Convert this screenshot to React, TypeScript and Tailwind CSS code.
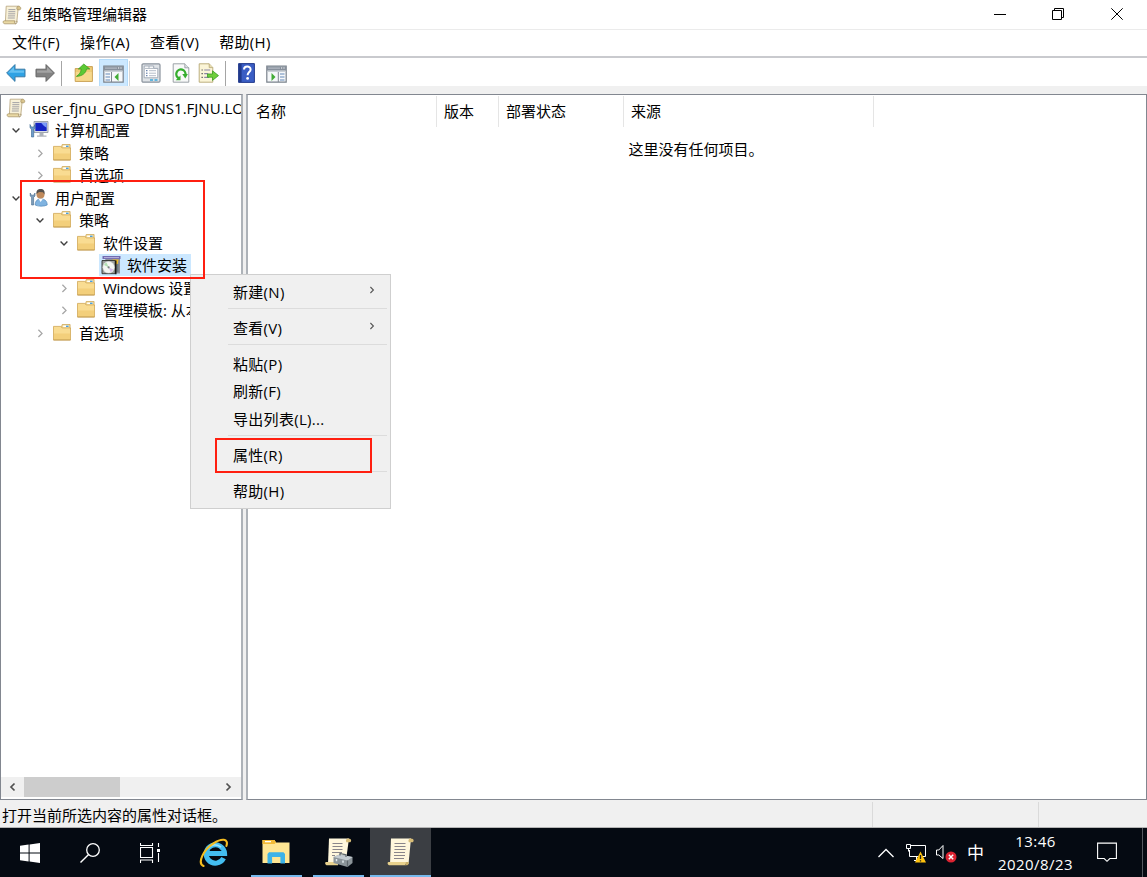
import React from 'react';

type IconProps = { className?: string };

const ScrollIcon = ({ className = 'w-5 h-5' }: IconProps) => (
  <svg viewBox="0 0 20 20" className={`shrink-0 ${className}`}>
    <path d="M4.2 1.2h12.2L14.8 17H3.4z" fill="#f8f1d8" stroke="#b5a27a" strokeWidth=".8" />
    <path d="M15.4 4.8c-1-.8-.8-3.6 1-3.6 3 0 2.8 3.6 1.2 3.6z" fill="#d9c48c" stroke="#a08c5e" strokeWidth=".7" />
    <path d="M2.2 15.8h10.6c-.8 1.2-.2 3 1 3H2.8c-2 0-2.2-3-.6-3z" fill="#ead9a4" stroke="#a08c5e" strokeWidth=".7" />
    <path d="M13.6 18.8c1.4 0 1.6-2 1.2-3" fill="none" stroke="#a08c5e" strokeWidth=".8" />
    <path d="M6.4 4.6h7M6.3 6.7h7M6.2 8.8h7M6 10.9h7M5.8 13h7" stroke="#9a9aa0" strokeWidth=".9" />
  </svg>
);

const FolderIcon = () => (
  <svg viewBox="0 0 20 20" className="w-5 h-5">
    <path d="M8 5.5l1.2-4h7.9V6H8z" fill="#f3dc9c" stroke="#caa04e" strokeWidth=".7" />
    <path d="M10.2 2.6h5.6v1.6h-5.6z" fill="#fff" />
    <path d="M13 2.6h2.6v1.4H13z" fill="#4ba0dd" />
    <path d="M.5 3.4h7.3l1.3 1.5h8.4v12H.5z" fill="#f9dc92" stroke="#d0a755" strokeWidth=".8" />
    <path d="M1 10.5h16v6H1z" fill="#f3cf7b" />
    <path d="M.5 17h17" stroke="#b98f43" strokeWidth=".8" />
  </svg>
);

const ComputerIcon = () => (
  <svg viewBox="0 0 20 20" className="w-5 h-5">
    <path d="M5 1.5h14v11H5z" fill="#d9dde2" stroke="#8d949e" strokeWidth=".8" />
    <path d="M6.3 2.8h11.4v8.2H6.3z" fill="#1423c4" />
    <path d="M12 2.8h5.7v5L15 6z" fill="#7a9af8" />
    <path d="M10.5 12.8h4v2.6h3v1.4H8v-1.4h2.5z" fill="#aeb3ba" />
    <path d="M1 4.5v3.3l1.5 1.4V17h2.2V9.2L6 7.8V4.5L4.8 7H2.3z" fill="#6f9dca" stroke="#386490" strokeWidth=".6" />
  </svg>
);

const UserIcon = () => (
  <svg viewBox="0 0 20 20" className="w-5 h-5">
    <path d="M6.2 17c0-4 2-6 5.6-6 4 0 6.4 2 6.4 6-3 1.6-9 1.6-12 0z" fill="#7fb3e0" stroke="#5086b8" strokeWidth=".7" />
    <path d="M9.8 11l1.8 3 2.2-3z" fill="#fff" />
    <circle cx="11.5" cy="6.5" r="4" fill="#c08a5c" />
    <path d="M7.5 6C7 2.2 9.3 1 11.6 1c3 0 4.7 2 3.8 5.4L14 4.2 10 4z" fill="#54504d" />
    <path d="M1.2 5v3l1.4 1.4V17h2V9.4L6 8V5L4.7 7.2H2.4z" fill="#7f9fbd" stroke="#426788" strokeWidth=".6" />
  </svg>
);

const SoftwareIcon = () => (
  <svg viewBox="0 0 20 20" className="w-5 h-5">
    <path d="M1.5 1h18v3h-18z" fill="#736cb0" />
    <path d="M3 2.6h15" stroke="#cbc7ea" strokeWidth=".8" />
    <path d="M4 4h15v14.5h-6z" fill="#8f919b" />
    <path d="M11.5 4.5h6L16.5 10l-3.5-1z" fill="#f0bd2a" />
    <path d="M15.5 9h2v8h-2z" fill="#6c7a80" />
    <path d="M1 5.5h13.2v13.2H1z" fill="#9da09e" stroke="#30322f" strokeWidth=".9" />
    <circle cx="7.6" cy="12.3" r="5.8" fill="#f4f6f3" stroke="#d9dcdc" strokeWidth=".5" />
    <path d="M7.6 12.3L3 10a5 5 0 0 1 2.5-2.6z" fill="#b2dfb4" />
    <path d="M7.6 12.3l4.6 2.3a5 5 0 0 1-2.5 2.6z" fill="#d5bce6" />
    <circle cx="7.6" cy="12.3" r="1.1" fill="#7a8580" />
    <path d="M14.8 5.5v13.8" stroke="#151515" strokeWidth="1.4" />
  </svg>
);

const BackIcon = () => (
  <svg viewBox="0 0 20 20" className="w-5 h-5">
    <path d="M.6 10L9 1.6v4.6h10v7.6H9v4.6z" fill="#2fa2e4" stroke="#3a7ba6" strokeWidth="1" strokeLinejoin="round" />
    <path d="M2.2 9.8L8 4v3.4h10v2.4z" fill="#66c1f1" />
  </svg>
);

const ForwardIcon = () => (
  <svg viewBox="0 0 20 20" className="w-5 h-5">
    <path d="M19.4 10L11 1.6v4.6H1v7.6h10v4.6z" fill="#828282" stroke="#666" strokeWidth="1" strokeLinejoin="round" />
    <path d="M17.8 9.8L12 4v3.4H2v2.4z" fill="#a3a3a3" />
  </svg>
);

const UpFolderIcon = () => (
  <svg viewBox="0 0 20 20" className="w-5 h-5">
    <path d="M1.2 5.6h8l1.4-2h7.8v14.8H1.2z" fill="#efcc76" stroke="#c49a4c" strokeWidth=".9" />
    <path d="M1.8 9h16v8.8h-16z" fill="#f6d88c" />
    <path d="M2.4 13.4c3-2 4.6-4.2 4.8-7.4H4.4L9.8 1l6 5h-3.3c-.6 4-4 7.2-10.1 7.4z" fill="#5cc934" stroke="#349a1e" strokeWidth=".7" />
  </svg>
);

const PaneIcon = ({ flip = false }: { flip?: boolean }) => (
  <svg viewBox="0 0 21 20" className="w-[21px] h-5">
    <path d="M.8 2.2h19.4v16H.8z" fill="#f6f8fa" stroke="#7a828c" strokeWidth="1.2" />
    <path d="M1 2.4h19v4.2H1z" fill="#87909c" />
    <path d="M2 4.1h12" stroke="#c5cbd2" strokeWidth=".9" />
    <path d="M15 4h1.2M17.4 4h1.2" stroke="#fff" strokeWidth="1.2" />
    <path d="M1 7.4h19" stroke="#c5cbd2" strokeWidth="1" />
    {flip ? (
      <>
        <path d="M12.3 8v10" stroke="#808791" strokeWidth="1" />
        <path d="M5.5 9L9.5 13l-4 4z" fill="#42ac35" />
        <path d="M14 10h4.5M14 13h4.5M14 16h4.5" stroke="#6387b8" strokeWidth="1.2" />
      </>
    ) : (
      <>
        <path d="M8.5 8v10" stroke="#808791" strokeWidth="1" />
        <path d="M15.5 9l-4 4 4 4z" fill="#42ac35" />
        <path d="M2.5 10H7M2.5 13H7M2.5 16H7" stroke="#6387b8" strokeWidth="1.2" />
      </>
    )}
  </svg>
);

const PropertiesIcon = () => (
  <svg viewBox="0 0 20 20" className="w-5 h-5">
    <rect x="1" y=".8" width="18" height="18.4" rx="1.2" fill="#dfe3e7" stroke="#8b939d" strokeWidth="1.2" />
    <path d="M3.2 3h9.5v2.4h4.1v9.4H3.2z" fill="#fff" stroke="#9aa4b1" strokeWidth=".9" />
    <path d="M8 3v2.4M12.7 5.4H4" stroke="#9aa4b1" strokeWidth=".8" />
    <path d="M5 7.7h1.5M5 10.2h1.5M5 12.7h1.5" stroke="#4c6b9c" strokeWidth="1" />
    <path d="M8 7.7h7M8 10.2h7M8 12.7h7" stroke="#b4bdc9" strokeWidth="1" />
    <path d="M9 17h3M13.5 17h3" stroke="#38a7dc" strokeWidth="1.5" />
  </svg>
);

const RefreshIcon = () => (
  <svg viewBox="0 0 20 20" className="w-5 h-5">
    <path d="M2.2.8h11.6l4 4v14.4H2.2z" fill="#f8f9f9" stroke="#92989e" strokeWidth=".9" />
    <path d="M13.8.8v4h4" fill="#dde0e2" stroke="#92989e" strokeWidth=".8" />
    <path d="M7.8 15.2A4.6 4.6 0 1 1 14.4 12" fill="none" stroke="#35ae2e" strokeWidth="2.3" />
    <path d="M11.3 11h5.6l-2.6 4.4z" fill="#35ae2e" />
    <path d="M9.5 12.4v4.8H4.7z" fill="#35ae2e" />
  </svg>
);

const ExportIcon = () => (
  <svg viewBox="0 0 21 20" className="w-[21px] h-5">
    <path d="M1.2.8h10l3.6 3.8v14.6H1.2z" fill="#fbf5d8" stroke="#b6a773" strokeWidth=".9" />
    <path d="M11.2.8v3.8h3.6" fill="#e7dcb2" stroke="#b6a773" strokeWidth=".8" />
    <path d="M3.5 7h1.3M3.5 10.7h1.3M3.5 14.4h1.3" stroke="#555" strokeWidth="1.2" />
    <path d="M6.2 7h6M6.2 10.7h4M6.2 14.4h5" stroke="#8a86a5" strokeWidth="1.2" />
    <path d="M9.5 11h5V7.8l6 4.8-6 4.8v-3.2h-5z" fill="#6fce3c" stroke="#3b9d24" strokeWidth=".8" />
  </svg>
);

const HelpIcon = () => (
  <svg viewBox="0 0 17 20" className="w-[17px] h-5">
    <path d="M.6.6h15.8v18.8H.6z" fill="#3a5dc4" stroke="#223a8c" strokeWidth="1" />
    <path d="M1 1h2.6v18H1z" fill="#20398c" />
    <path d="M6 6.6c0-4 6.6-4 6.6-.2 0 2.6-3 2.8-3 5.8" fill="none" stroke="#fff" strokeWidth="2" />
    <circle cx="9.6" cy="15.4" r="1.4" fill="#fff" />
  </svg>
);

const Chevron = ({ open = false }: { open?: boolean }) => (
  <svg viewBox="0 0 10 10" className="w-2.5 h-2.5">
    {open ? (
      <path d="M1.6 3.6L5 7l3.4-3.4" fill="none" stroke="#404040" strokeWidth="1.4" />
    ) : (
      <path d="M3.4 1.8L7 5.4 3.4 9" fill="none" stroke="#a6a6a6" strokeWidth="1.3" />
    )}
  </svg>
);

interface TreeNode {
  label: string;
  level: number;
  icon: React.ReactNode;
  open?: boolean;
  leaf?: boolean;
  selected?: boolean;
}

const tree: TreeNode[] = [
  { label: '计算机配置', level: 0, icon: <ComputerIcon />, open: true },
  { label: '策略', level: 1, icon: <FolderIcon /> },
  { label: '首选项', level: 1, icon: <FolderIcon /> },
  { label: '用户配置', level: 0, icon: <UserIcon />, open: true },
  { label: '策略', level: 1, icon: <FolderIcon />, open: true },
  { label: '软件设置', level: 2, icon: <FolderIcon />, open: true },
  { label: '软件安装', level: 3, icon: <SoftwareIcon />, leaf: true, selected: true },
  { label: 'Windows 设置', level: 2, icon: <FolderIcon /> },
  { label: '管理模板: 从本', level: 2, icon: <FolderIcon /> },
  { label: '首选项', level: 1, icon: <FolderIcon /> },
];

const indent = ['pl-[5px]', 'pl-[29px]', 'pl-[53px]', 'pl-[77px]'];

const TreeRow = ({ node }: { node: TreeNode }) => (
  <div className={`flex h-[22.5px] items-center ${indent[node.level]}`}>
    <div className="w-5 shrink-0 pl-1">{!node.leaf && <Chevron open={node.open} />}</div>
    <div className={`flex h-[22px] shrink-0 items-center ${node.selected ? 'bg-[#cce8ff] pr-1' : ''}`}>
      <div className="ml-[3px] w-[26px] shrink-0">
        <div className="-ml-px">{node.icon}</div>
      </div>
      <span className={`-ml-px whitespace-nowrap leading-5 ${node.label.startsWith('W') ? 'tracking-[-.3px]' : ''}`}>
        {node.label}
      </span>
    </div>
  </div>
);

const MenuItem = ({ label, sub = false }: { label: string; sub?: boolean }) => (
  <div className="flex h-[27.5px] items-center justify-between pl-[42px] pr-[14px]">
    <span>{label}</span>
    {sub && (
      <svg viewBox="0 0 8 8" className="mb-[3px] w-2 h-2">
        <path d="M2.4 1L5.4 4l-3 3" fill="none" stroke="#555" strokeWidth="1.1" />
      </svg>
    )}
  </div>
);

const MenuSeparator = () => (
  <div className="h-[8.6px] pt-[2.5px] pl-[37px] pr-[3px]">
    <div className="h-px bg-[#dcdcdc]" />
  </div>
);

const ContextMenu = () => (
  <div className="absolute left-[190px] top-[274px] h-[235px] w-[201px] border border-[#cfcfcf] bg-[#f0f0f0] pt-[2.8px] tracking-[.3px]">
    <MenuItem label="新建(N)" sub />
    <MenuSeparator />
    <MenuItem label="查看(V)" sub />
    <MenuSeparator />
    <MenuItem label="粘贴(P)" />
    <MenuItem label="刷新(F)" />
    <MenuItem label="导出列表(L)..." />
    <MenuSeparator />
    <MenuItem label="属性(R)" />
    <MenuSeparator />
    <MenuItem label="帮助(H)" />
  </div>
);

const TitleBar = () => (
  <div className="flex h-[30px] items-center border-b border-[#ebebeb] pl-[2px]">
    <ScrollIcon />
    <span className="ml-[5px] flex-1 pb-px text-[15px]">组策略管理编辑器</span>
    <svg viewBox="0 0 12 12" className="mr-[46px] w-3 h-3">
      <path d="M0 5.5h12" stroke="#000" />
    </svg>
    <svg viewBox="0 0 12 12" className="mr-[47px] mb-[2px] w-3 h-3">
      <path d="M.5 2.5h9v9h-9zM2.5 2V.5h9v9H10" fill="none" stroke="#000" />
    </svg>
    <svg viewBox="0 0 12 12" className="mr-6 mb-[2px] w-3 h-3">
      <path d="M.3.3l11.4 11.4M11.7.3L.3 11.7" stroke="#000" />
    </svg>
  </div>
);

const Divider = () => <div className="h-[25px] w-px bg-[#a5a5a5]" />;

const Toolbar = () => (
  <div className="flex h-7 items-center pl-[6px] pt-[2px]">
    <BackIcon />
    <div className="ml-[9px]"><ForwardIcon /></div>
    <div className="ml-[6px] mr-[12px]"><Divider /></div>
    <UpFolderIcon />
    <div className="ml-[5px] flex h-[28px] w-[29px] items-center justify-center border border-[#b5dcfa] bg-[#cce8ff] pt-0.5">
      <PaneIcon />
    </div>
    <div className="mr-[11px] ml-px"><div className="h-[25px] w-px bg-[#d5d5d5]" /></div>
    <PropertiesIcon />
    <div className="ml-[10px]"><RefreshIcon /></div>
    <div className="ml-[7px]"><ExportIcon /></div>
    <div className="mr-[12px] ml-[6px]"><Divider /></div>
    <HelpIcon />
    <div className="ml-[11px] pt-0.5"><PaneIcon flip /></div>
  </div>
);

const Taskbar = () => (
  <div className="flex h-[49px] items-center bg-[#050a12] text-white">
    <div className="flex w-[60px] justify-center">
      <svg viewBox="0 0 20 20" className="w-5 h-5">
        <path d="M0 2.8l8.6-1.2v7.9H0zM9.6 1.4L20 0v9.5H9.6zM0 10.5h8.6v7.9L0 17.2zM9.6 10.5H20V20L9.6 18.6z" fill="#fff" />
      </svg>
    </div>
    <div className="flex w-[60px] justify-center">
      <svg viewBox="0 0 20 20" className="w-5 h-5">
        <circle cx="13" cy="7" r="6.3" fill="none" stroke="#fff" strokeWidth="1.3" />
        <path d="M8.6 11.4L.5 19.5" stroke="#fff" strokeWidth="1.4" />
      </svg>
    </div>
    <div className="flex w-[60px] justify-center">
      <svg viewBox="0 0 20 20" className="w-5 h-5">
        <path d="M.5 4.5h12v10H.5zM.5 0v2.5h12V0M.5 20v-3h12v3M18.5 0v4M18.5 10v9" fill="none" stroke="#fff" strokeWidth="1.1" />
        <path d="M17 6h3v3h-3z" fill="#fff" />
      </svg>
    </div>
    <div className="flex w-[71px] justify-center pr-[3px]">
      <svg viewBox="0 0 30 30" className="w-[30px] h-[30px]">
        <path d="M24.6 20.2A9.2 9.2 0 1 1 25.6 15.6H9" fill="none" stroke="#43bdf0" strokeWidth="5" />
        <path d="M9 10.2C11.6 6.5 18 5.4 22 9.2" fill="none" stroke="#9ae2fb" strokeWidth="1.6" />
        <path d="M4.5 28C-2 25 4.5 11.5 14.5 5.3 22.5.2 30 .2 27.4 8" fill="none" stroke="#f5bd20" strokeWidth="2.1" strokeLinecap="round" />
      </svg>
    </div>
    <div className="flex h-full w-[51px] items-center justify-center border-b-2 border-[#76b9ed]">
      <svg viewBox="0 0 28 26" className="mr-[2px] w-7 h-[26px]">
        <path d="M.5 1h12l1.5 2.5h13.5V24H.5z" fill="#ffe693" />
        <path d="M.5 1h12l1.5 2.5L12.5 5H.5z" fill="#f3bb37" />
        <path d="M3 2h6v1.3H3z" fill="#fff" />
        <path d="M5.5 24.5V15l1.5-1.7h14.5L23 15v9.5h-4.6V18h-8.3v6.5z" fill="#3db3e8" />
      </svg>
    </div>
    <div className="ml-[11px] flex h-full w-[51px] items-center justify-center border-b-2 border-[#76b9ed]">
      <svg viewBox="0 0 30 30" className="w-[30px] h-[30px]">
        <path d="M5 1.5h20L21.5 27H4z" fill="#fff7dc" />
        <path d="M22.5 5.3c-1-1-.7-3.8 1.7-3.8 4 0 3.4 3.8 1.3 3.8z" fill="#d8bd77" />
        <path d="M2 25h12v3.3H3.3C.8 28.3.7 25 2 25z" fill="#e8d18d" />
        <path d="M8.5 6.5h10M8.5 9.5h10M8.5 12.5h10M8 15.5h10M8 18.5h3" stroke="#89858a" strokeWidth="1" />
        <path d="M9.5 20l6-2.5 13 2.5v6l-5 4-14-4z" fill="#8b9499" />
        <path d="M9.5 20l6-2.5 13 2.5-5 3.5z" fill="#c3cbd0" />
        <path d="M16 18.5v-2l6 1.3v2.2M23.5 23.5v6.3" fill="none" stroke="#5f686d" strokeWidth="1.2" />
        <path d="M12.5 22v2.2M19 23.5v2.2" stroke="#e2eaee" strokeWidth="1.5" />
      </svg>
    </div>
    <div className="ml-[6px] flex h-full w-[61px] items-center justify-center border-b-2 border-[#76b9ed] bg-[#3b3e43]">
      <svg viewBox="0 0 30 30" className="w-[30px] h-[30px]">
        <path d="M5 1.5h20L22.5 27H4z" fill="#fff7dc" />
        <path d="M23 5.3c-1-1-.7-3.8 1.7-3.8 4 0 3.4 3.8 1.3 3.8z" fill="#d8bd77" />
        <path d="M2.6 25h17c-1 1.3-.4 3.3 1.3 3.3h-17C1.3 28.3 1 25 2.6 25z" fill="#e8d18d" />
        <path d="M20.9 28.3c1.6 0 2-1.8 1.7-3.3h-3c-.8 1.3-.3 3.3 1.3 3.3z" fill="#cbb06a" />
        <path d="M8.5 6.5h11M8.5 9.5h11M8.5 12.5h11M8 15.5h11M8 18.5h11M8 21.5h10" stroke="#89858a" strokeWidth="1" />
      </svg>
    </div>
    <div className="flex-1" />
    <svg viewBox="0 0 16 10" className="mr-3 w-4 h-2.5">
      <path d="M.5 9L8 1.5 15.5 9" fill="none" stroke="#fff" strokeWidth="1.3" />
    </svg>
    <svg viewBox="0 0 20 20" className="mr-[10px] w-5 h-5">
      <path d="M5 2.5h14.5v11H3.5V7M.5 1.5h4v4h-4zM2.5 5.5v3M8 17.5h5M10.5 14v3" fill="none" stroke="#fff" />
      <path d="M14.5 8.5l5.5 11H9z" fill="#ffc20d" />
      <path d="M14.5 12v4M14.5 17.2v1.3" stroke="#222" strokeWidth="1.3" />
    </svg>
    <svg viewBox="0 0 21 20" className="mr-[10px] w-[21px] h-5">
      <path d="M.5 7h2.3L7 2.5v13L2.8 12H.5z" fill="none" stroke="#fff" />
      <circle cx="15" cy="14" r="5.5" fill="#dc2331" />
      <path d="M12.8 11.8l4.4 4.4M17.2 11.8l-4.4 4.4" stroke="#fff" strokeWidth="1.4" />
    </svg>
    <span className="mr-[12px] text-[17px] leading-5">中</span>
    <div className="mr-[22px] w-[79px] text-center text-[15px] leading-[22.5px] tracking-[.45px]">
      <div>13:46</div>
      <div>2020/8/23</div>
    </div>
    <svg viewBox="0 0 20 21" className="mr-[25px] w-5 h-[21px]">
      <path d="M.6 1.1h18.8v15.4h-6.6L10 19.3l-2.8-2.8H.6z" fill="none" stroke="#fff" strokeWidth="1.1" />
    </svg>
    <div className="mr-1 h-full w-px bg-[#555960]" />
  </div>
);

export default function App() {
  return (
    <div className="relative flex h-[877px] w-[1147px] flex-col overflow-hidden bg-white font-['Open_Sans','Noto_Sans_CJK_SC',sans-serif] text-[15px] leading-[22px] text-black">
      <TitleBar />
      <div className="flex h-[28px] items-center gap-5 border-b-2 border-[#c9cace] pb-[2px] pl-3 tracking-[.3px]">
        <span>文件(F)</span>
        <span>操作(A)</span>
        <span>查看(V)</span>
        <span>帮助(H)</span>
      </div>
      <Toolbar />
      <div className="flex h-[715px] gap-[3px] bg-[#f0f0f0] pt-2">
        <div className="flex h-[706px] w-[243px] flex-col overflow-hidden border border-r-2 border-[#828790] border-r-[#adb2b8] bg-white">
          <div className="flex-1 overflow-hidden pt-[1.6px] pl-px">
            <div className="flex h-[22.5px] items-center pl-1">
              <ScrollIcon />
              <span className="ml-[6px] w-[209px] overflow-hidden whitespace-nowrap">user_fjnu_GPO [DNS1.FJNU.LOC</span>
            </div>
            {tree.map((node, i) => (
              <TreeRow key={i} node={node} />
            ))}
          </div>
          <div className="mb-[2px] flex h-5 items-center bg-[#f0f0f0] pl-px">
            <svg viewBox="0 0 10 10" className="mx-[6px] w-2.5 h-2.5">
              <path d="M6.5 1.5L3 5l3.5 3.5" fill="none" stroke="#505050" strokeWidth="1.7" />
            </svg>
            <div className="h-5 w-24 bg-[#cdcdcd]" />
            <svg viewBox="0 0 10 10" className="ml-auto mr-[8px] w-2.5 h-2.5">
              <path d="M3.5 1.5L7 5 3.5 8.5" fill="none" stroke="#505050" strokeWidth="1.7" />
            </svg>
          </div>
        </div>
        <div className="h-[706px] flex-1 border border-l-2 border-[#828790] border-l-[#adb2b8] bg-white pt-px">
          <div className="flex h-[31px] items-center">
            <div className="h-full w-[189px] border-r border-[#e5e5e5] pl-2 pt-1">名称</div>
            <div className="h-full w-[62px] border-r border-[#e5e5e5] pl-[7px] pt-1">版本</div>
            <div className="h-full w-[125px] border-r border-[#e5e5e5] pl-[7px] pt-1">部署状态</div>
            <div className="h-full w-[250px] border-r border-[#e5e5e5] pl-[7px] pt-1">来源</div>
          </div>
          <div className="pt-[11px] pr-[2px] text-center">这里没有任何项目。</div>
        </div>
      </div>
      <div className="flex h-[27px] items-center border-b border-[#b5b5b5] bg-[#f0f0f0]">
        <span className="w-[872px] pl-[2px] pt-0.5">打开当前所选内容的属性对话框。</span>
        <div className="h-[25px] w-[166px] border-l border-[#dadada]" />
        <div className="h-[25px] flex-1 border-l border-[#dadada]" />
      </div>
      <Taskbar />

      <ContextMenu />
      <div className="absolute left-[20px] top-[180px] h-[99px] w-[185px] border-2 border-[#ff1f10]" />
      <div className="absolute left-[215px] top-[438px] h-[35px] w-[157px] border-2 border-[#ff1f10]" />
    </div>
  );
}
